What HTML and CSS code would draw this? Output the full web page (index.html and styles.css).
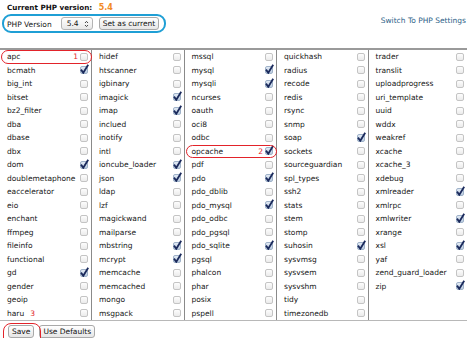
FILE: index.html
```html
<!DOCTYPE html>
<html lang="en">
<head>
  <meta charset="UTF-8">
  <title>PHP Selector - Extensions</title>
  <link rel="stylesheet" href="styles.css">
</head>
<body>

<div class="current">Current PHP version: <span class="ver">5.4</span></div>

<div class="top">
  <div class="picker">
    <span class="label">PHP Version</span>
    <span class="select">5.4
      <svg class="arrows" viewBox="0 0 5 8"><path d="M1 3 L2.5 1.4 L4 3 M1 5 L2.5 6.6 L4 5"/></svg>
    </span>
    <button>Set as current</button>
  </div>
  <a class="switch" href="#">Switch To PHP Settings</a>
</div>

<div class="ext" id="ext"></div>

<div class="actions">
  <button>Save</button>
  <button>Use Defaults</button>
  <span class="ring save-ring"></span>
</div>

<script>
  // * = enabled
  const columns = [
    ['apc', 'bcmath*', 'big_int', 'bitset', 'bz2_filter', 'dba', 'dbase', 'dbx', 'dom*', 'doublemetaphone',
     'eaccelerator', 'eio', 'enchant', 'ffmpeg', 'fileinfo', 'functional', 'gd*', 'gender', 'geoip', 'haru'],
    ['hidef', 'htscanner', 'igbinary', 'imagick*', 'imap*', 'inclued', 'inotify', 'intl', 'ioncube_loader*', 'json*',
     'ldap', 'lzf', 'magickwand', 'mailparse', 'mbstring*', 'mcrypt*', 'memcache', 'memcached', 'mongo', 'msgpack'],
    ['mssql', 'mysql*', 'mysqli*', 'ncurses', 'oauth', 'oci8', 'odbc', 'opcache*', 'pdf', 'pdo*',
     'pdo_dblib', 'pdo_mysql*', 'pdo_odbc', 'pdo_pgsql', 'pdo_sqlite*', 'pgsql', 'phalcon', 'phar', 'posix', 'pspell'],
    ['quickhash', 'radius', 'recode', 'redis', 'rsync', 'snmp', 'soap*', 'sockets', 'sourceguardian', 'spl_types',
     'ssh2', 'stats', 'stem', 'stomp', 'suhosin*', 'sysvmsg', 'sysvsem', 'sysvshm', 'tidy', 'timezonedb'],
    ['trader', 'translit', 'uploadprogress', 'uri_template', 'uuid', 'wddx', 'weakref', 'xcache', 'xcache_3', 'xdebug',
     'xmlreader*', 'xmlrpc', 'xmlwriter*', 'xrange', 'xsl*', 'yaf', 'zend_guard_loader', 'zip*']
  ];

  // notes drawn on the screenshot
  const ringed = { apc: 1, opcache: 2 };
  const after = { haru: 3 };

  const tick = '<svg class="tick" viewBox="0 0 9 10"><path d="M1 5.6 L3.3 8.8 L8.2 0.8"/></svg>';

  const ext = document.getElementById('ext');
  columns.forEach(list => {
    const col = document.createElement('div');
    col.className = 'col';
    for (let i = 0; i < 20; i++) {
      const row = document.createElement('div');
      row.className = 'row';
      const item = list[i];
      if (item) {
        const on = item.endsWith('*');
        const name = on ? item.slice(0, -1) : item;
        let html = `<span class="name">${name}</span>`;
        if (after[name]) html += `<span class="note after">${after[name]}</span>`;
        if (ringed[name]) {
          html += `<span class="note right">${ringed[name]}</span>`;
          row.classList.add('marked');
        }
        html += `<span class="cb${on ? ' on' : ''}">${on ? tick : ''}</span>`;
        if (ringed[name]) html += '<span class="ring"></span>';
        row.innerHTML = html;
      }
      col.appendChild(row);
    }
    ext.appendChild(col);
  });
</script>

</body>
</html>
```

FILE: styles.css
```css
html, body {
  overflow: hidden;
}

body {
  margin: 0;
  font-family: "DejaVu Sans", Verdana, sans-serif;
  font-size: 7.5px;
  color: #161616;
  background: #fff;
}

.current {
  padding: 3px 7px 0;
  line-height: 10px;
  font-weight: bold;
  font-size: 7.2px;
  color: #111;
}

.ver {
  margin-left: 4px;
  color: #f28a26;
  font-size: 8px;
}

.top {
  display: flex;
  justify-content: space-between;
  margin: 1px 8px 0 2px;
}

.picker {
  display: flex;
  align-items: center;
  height: 19px;
  box-sizing: border-box;
  width: 164px;
  padding: 0 4px 0 3px;
  border: 2px solid #1f9fd5;
  border-radius: 9px;
}

.label {
  margin-top: 2px;
}

.select {
  display: inline-flex;
  align-items: center;
  justify-content: space-between;
  box-sizing: border-box;
  width: 32px;
  height: 13px;
  margin-left: 9px;
  padding: 0 3px 0 5px;
  border: 1px solid #b4b4b4;
  border-radius: 3px;
  background: linear-gradient(#fff, #e8e8e8);
}

.arrows {
  width: 5px;
  height: 8px;
  fill: none;
  stroke: #333;
  stroke-width: 0.9;
}

button {
  font-family: "DejaVu Sans", Verdana, sans-serif;
  font-size: 7.5px;
  height: 13px;
  line-height: 11px;
  padding: 0 3px;
  border: 1px solid #a9a9a9;
  border-radius: 3px;
  background: linear-gradient(#fff, #e6e6e6);
  color: #111;
  cursor: pointer;
}

.picker button {
  margin-left: 6px;
}

.switch {
  margin-top: 2px;
  line-height: 10px;
  color: #2e5f88;
  text-decoration: none;
  align-self: flex-start;
}

.ext {
  display: grid;
  grid-template-columns: 91px 92.5px 92.5px 91.5px 1fr;
  margin: 15px 7px 0 0;
  border-top: 2px solid #9a9a9a;
  border-bottom: 1px solid #b8b8b8;
}

.col + .col {
  border-left: 1px solid #8a8a8a;
}

.row {
  display: flex;
  align-items: center;
  height: 13.5px;
  padding: 0 3px 0 7px;
}

.marked {
  position: relative;
}

.cb {
  position: relative;
  flex: none;
  width: 8px;
  height: 8px;
  box-sizing: border-box;
  margin-left: auto;
  border: 1px solid #c4c4c4;
  border-radius: 2px;
  background: linear-gradient(#fdfdfd, #ebebeb);
}

.cb.on {
  border-color: #9fb2c9;
  background: linear-gradient(#e2eaf4, #bccde1);
}

.tick {
  position: absolute;
  left: -1px;
  top: -3px;
  width: 9px;
  height: 10px;
  fill: none;
  stroke: #1b2a5c;
  stroke-width: 1.8;
}

.note {
  color: #e2232a;
}

.note.after {
  margin-left: 6px;
}

.note.right {
  margin-left: auto;
  margin-right: 2px;
}

.note.right + .cb {
  margin-left: 0;
}

.ring {
  position: absolute;
  left: 1px;
  right: -1px;
  top: 0;
  bottom: 0;
  border: 1.5px solid #e2232a;
  border-radius: 7px;
  pointer-events: none;
}

.actions {
  position: relative;
  display: flex;
  gap: 5px;
  padding: 4px 0 0 8px;
}

.save-ring {
  left: 3px;
  right: auto;
  top: 2px;
  bottom: auto;
  width: 36px;
  height: 21px;
  border-radius: 8px;
}
```
